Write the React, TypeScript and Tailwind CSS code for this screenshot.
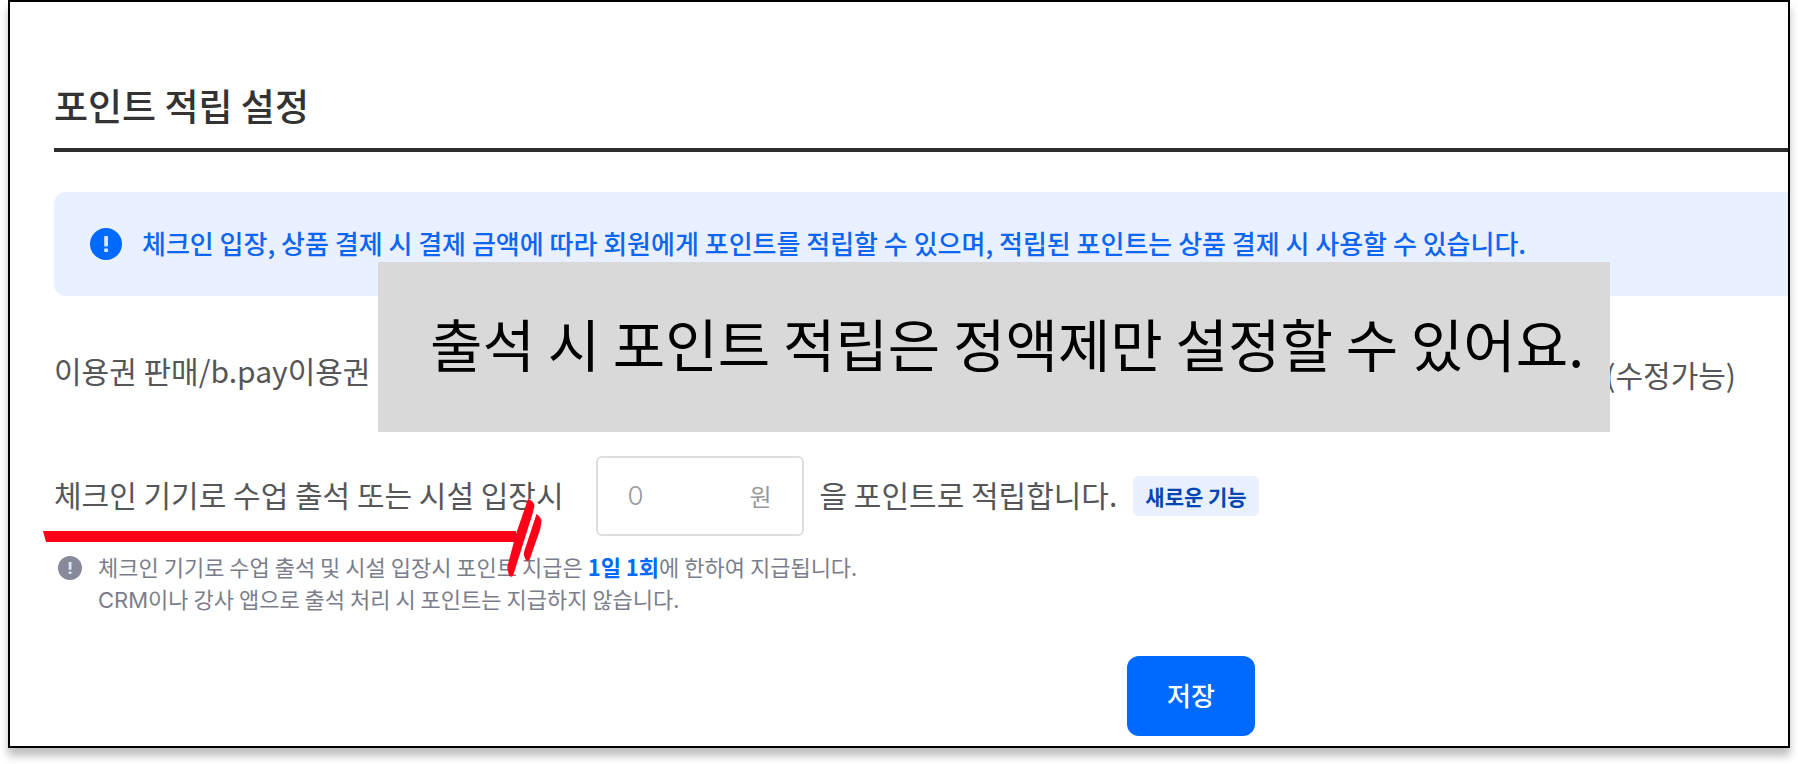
import { useId, useState } from "react";

const HIGHLIGHT = "출석 시 포인트 적립은 정액제만 설정할 수 있어요.";

function AlertIcon({ className }: { className: string }) {
  return (
    <svg viewBox="0 0 32 32" className={className} aria-hidden="true">
      <circle cx="16" cy="16" r="16" fill="currentColor" />
      <rect x="14.2" y="8" width="3.8" height="10.4" rx="0.6" fill="#d9e6ff" />
      <rect x="14.2" y="20.6" width="3.8" height="3.4" rx="0.6" fill="#d9e6ff" />
    </svg>
  );
}

// Hand-drawn marker arrow under the check-in label
function MarkerArrow() {
  return (
    <svg
      viewBox="0 0 500 84"
      className="pointer-events-none absolute top-10 -left-3 h-21 w-[500px]"
      fill="#ff0019"
      aria-hidden="true"
    >
      <path d="M1 35 H474 V46 H4 Z" />
      <path d="M486 3 Q492 5 492.5 10 L490.5 18 L471 80 Q468 82 467 79 Q465 74 465.5 70 L474 38 Z" />
      <path d="M494.5 18 Q499.5 21 499.5 26 L498 34 L487.5 64 Q485.5 66 484 64 Q481 59 482 56 Z" />
    </svg>
  );
}

function AmountField({ id }: { id: string }) {
  const [amount, setAmount] = useState("");

  return (
    <div className="flex h-20 w-52 items-center rounded-md border-2 border-[#dedede] bg-white px-7.5 text-2xl text-[#999999]">
      <input
        id={id}
        type="text"
        inputMode="numeric"
        placeholder="0"
        value={amount}
        onChange={(e) => setAmount(e.target.value)}
        className="w-full min-w-0 bg-transparent font-['Inter',sans-serif] text-[26px] font-light outline-none placeholder:text-[#999999]"
      />
      <span className="shrink-0">원</span>
    </div>
  );
}

export default function App() {
  const amountId = useId();

  return (
    <div className="bg-white px-2 pb-4 font-['Noto_Sans_CJK_KR',sans-serif]">
      <main className="relative border-2 border-black bg-white pt-20 pb-2.5 pl-11 text-[30px] text-[#555658] shadow-[0_8px_8px_rgba(0,0,0,0.25)]">
        <h1 className="border-b-4 border-[#2d2d2d] pb-5 text-[37px] leading-[46px] font-medium text-[#333333]">
          포인트 적립 설정
        </h1>

        <div className="relative mt-10">
          <p className="flex h-26 items-center gap-5 rounded-l-xl bg-[#e9f0ff] pl-9 text-[26px] font-medium text-[#0d66f2]">
            <AlertIcon className="size-8 shrink-0 text-[#006aff]" />
            <span className="pb-1">
              체크인 입장, 상품 결제 시 결제 금액에 따라 회원에게 포인트를 적립할 수 있으며, 적립된 포인트는 상품 결제 시 사용할 수 있습니다.
            </span>
          </p>
          <p className="absolute top-[70px] right-[178px] left-[324px] flex h-[170px] items-center bg-[#d9d9d9] pb-2 pl-13 text-[57px] whitespace-nowrap text-black">
            {HIGHLIGHT}
          </p>
        </div>

        <div className="mt-14 flex h-12 items-center justify-between pr-13 leading-9">
          <span className="pb-3">이용권 판매/b.pay이용권</span>
          <span className="pb-1">(수정가능)</span>
        </div>

        <div className="relative mt-14 flex h-20 items-center">
          <label htmlFor={amountId} className="mr-8 pb-1">
            체크인 기기로 수업 출석 또는 시설 입장시
          </label>
          <AmountField id={amountId} />
          <span className="ml-4 pb-1">을 포인트로 적립합니다.</span>
          <span className="ml-4 rounded-md bg-[#e9f0ff] px-3 text-[21px] leading-10 font-bold text-[#0046b0]">
            새로운 기능
          </span>
          <MarkerArrow />
        </div>

        <div className="mt-4 flex gap-4 pl-1 text-[22px] leading-8 text-[#7b7e8a]">
          <AlertIcon className="mt-1 size-6 shrink-0 text-[#868a99]" />
          <p className="-mt-0.5 mb-0.5">
            체크인 기기로 수업 출석 및 시설 입장시 포인트 지급은{" "}
            <strong className="font-bold text-[#006aff]">1일 1회</strong>에 한하여 지급됩니다.
            <br />
            <span className="font-['Inter',sans-serif] leading-none">CRM</span>이나 강사 앱으로 출석 처리 시 포인트는 지급하지 않습니다.
          </p>
        </div>

        <div className="mt-10 flex justify-end pr-[533px]">
          <button
            type="button"
            className="h-20 w-32 rounded-xl bg-[#006aff] pb-1 text-[26px] font-medium text-white"
          >
            저장
          </button>
        </div>
      </main>
    </div>
  );
}
